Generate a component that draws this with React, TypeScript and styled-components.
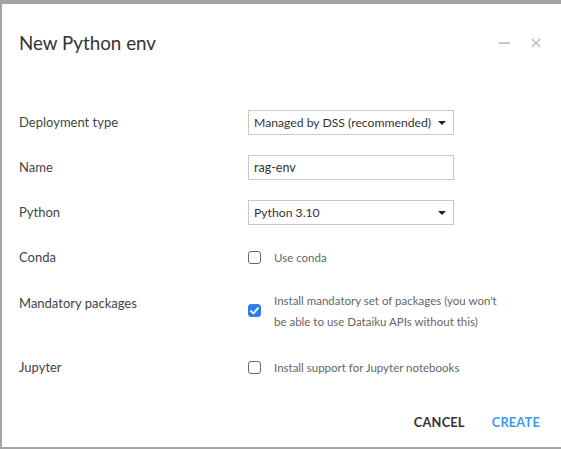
import React from "react";
import styled, { createGlobalStyle } from "styled-components";

const Global = createGlobalStyle`
  html, body { margin: 0; padding: 0; background: #a3a3a3; overflow: hidden; }
  body { font-family: Lato, "Noto Sans", sans-serif; }
  * { box-sizing: border-box; }
`;

const Page = styled.div`
  width: 561px;
  height: 449px;
  padding: 4px 0 0 2px;
  overflow: hidden;
`;

const Modal = styled.div`
  width: 580px;
  height: 443px;
  background: #fff;
  display: flex;
  flex-direction: column;
`;

const Header = styled.div`
  height: 78px;
  display: flex;
  align-items: center;
  padding: 0 0 0 17px;
`;

const Title = styled.h1`
  margin: 0;
  flex: 1;
  font-size: 18.8px;
  font-weight: 400;
  color: #333;
  line-height: 78px;
`;

const HeaderButtons = styled.div`
  display: flex;
  align-items: center;
  gap: 20px;
  margin-right: 40px;
`;

const IconButton = styled.span`
  display: inline-flex;
  width: 12px;
  height: 12px;
  align-items: center;
  justify-content: center;
`;

const Form = styled.div`
  padding: 28px 0 0 17px;
  display: flex;
  flex-direction: column;
`;

const Row = styled.div<{ $mb?: number }>`
  display: flex;
  align-items: flex-start;
  margin-bottom: ${(p) => p.$mb ?? 20}px;
`;

const Label = styled.div<{ $offset?: number }>`
  width: 229px;
  flex: none;
  font-size: 13px;
  line-height: 25px;
  color: #444;
  margin-top: ${(p) => p.$offset ?? 0}px;
`;

const SelectBox = styled.div`
  width: 206px;
  height: 25px;
  border: 1px solid #c8c8c8;
  display: flex;
  align-items: center;
  padding: 0 6px 0 5px;
  font-size: 12.2px;
  color: #333;
  white-space: nowrap;
  justify-content: space-between;
`;

const Caret = styled.span`
  width: 0;
  height: 0;
  border-left: 4px solid transparent;
  border-right: 4px solid transparent;
  border-top: 4px solid #222;
  margin-right: 1px;
`;

const TextInput = styled.input`
  width: 206px;
  height: 25px;
  border: 1px solid #c8c8c8;
  padding: 0 5px;
  font-family: inherit;
  font-size: 12.5px;
  color: #333;
  outline: none;
`;

const CheckWrap = styled.div`
  display: flex;
  align-items: flex-start;
`;

const Box = styled.span<{ $checked?: boolean; $top: number }>`
  width: 13px;
  height: 13px;
  flex: none;
  margin-top: ${(p) => p.$top}px;
  border-radius: 3px;
  border: 1px solid ${(p) => (p.$checked ? "#2d7ff0" : "#666")};
  background: ${(p) => (p.$checked ? "#2d7ff0" : "#fff")};
  display: inline-flex;
  align-items: center;
  justify-content: center;
`;

const CheckText = styled.div<{ $lh: number }>`
  margin-left: 13px;
  font-size: 11.5px;
  line-height: ${(p) => p.$lh}px;
  color: #666;
  width: 230px;
`;

const Footer = styled.div`
  margin-top: auto;
  height: 50px;
  display: flex;
  justify-content: flex-end;
  align-items: center;
  gap: 27px;
  padding: 0 42px 4px 0;
`;

const FooterButton = styled.button<{ $primary?: boolean }>`
  background: none;
  border: none;
  padding: 0;
  font-family: inherit;
  font-size: 12.8px;
  font-weight: 700;
  letter-spacing: 0.2px;
  color: ${(p) => (p.$primary ? "#3c9bf5" : "#333")};
  line-height: 16px;
`;

function Check({ checked, top }: { checked?: boolean; top: number }) {
  return (
    <Box $checked={checked} $top={top}>
      {checked && (
        <svg width="9" height="8" viewBox="0 0 9 8">
          <path d="M1 4.2 L3.4 6.4 L8 1.2" stroke="#fff" strokeWidth="1.8" fill="none" strokeLinecap="round" strokeLinejoin="round" />
        </svg>
      )}
    </Box>
  );
}

export default function App() {
  return (
    <>
      <Global />
      <Page>
        <Modal>
          <Header>
            <Title>New Python env</Title>
            <HeaderButtons>
              <IconButton>
                <svg width="11" height="2" viewBox="0 0 11 2">
                  <rect width="11" height="2" fill="#c8c8c8" />
                </svg>
              </IconButton>
              <IconButton>
                <svg width="10" height="10" viewBox="0 0 10 10">
                  <path d="M1 1 L9 9 M9 1 L1 9" stroke="#c8c8c8" strokeWidth="1.8" />
                </svg>
              </IconButton>
            </HeaderButtons>
          </Header>
          <Form>
            <Row>
              <Label>Deployment type</Label>
              <SelectBox>
                <span>Managed by DSS (recommended)</span>
                <Caret />
              </SelectBox>
            </Row>
            <Row>
              <Label>Name</Label>
              <TextInput defaultValue="rag-env" />
            </Row>
            <Row>
              <Label>Python</Label>
              <SelectBox>
                <span>Python 3.10</span>
                <Caret />
              </SelectBox>
            </Row>
            <Row>
              <Label>Conda</Label>
              <CheckWrap>
                <Check top={6} />
                <CheckText $lh={25}>Use conda</CheckText>
              </CheckWrap>
            </Row>
            <Row $mb={23}>
              <Label $offset={1}>Mandatory packages</Label>
              <CheckWrap>
                <Check checked top={14} />
                <CheckText $lh={21}>
                  Install mandatory set of packages (you won't be able to use Dataiku APIs without this)
                </CheckText>
              </CheckWrap>
            </Row>
            <Row>
              <Label>Jupyter</Label>
              <CheckWrap>
                <Check top={6} />
                <CheckText $lh={25}>Install support for Jupyter notebooks</CheckText>
              </CheckWrap>
            </Row>
          </Form>
          <Footer>
            <FooterButton>CANCEL</FooterButton>
            <FooterButton $primary>CREATE</FooterButton>
          </Footer>
        </Modal>
      </Page>
    </>
  );
}
